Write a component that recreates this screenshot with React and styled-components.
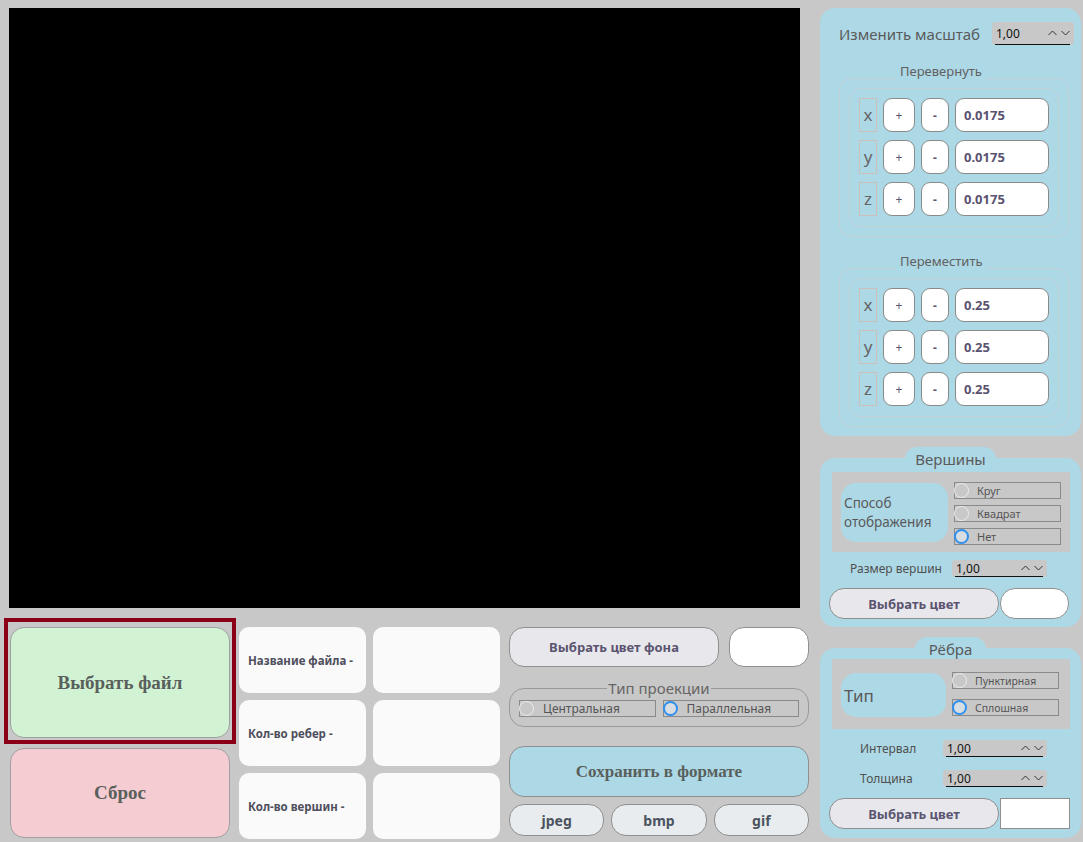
import styled, { createGlobalStyle } from "styled-components";

const GlobalStyle = createGlobalStyle`
  * { box-sizing: border-box; }
  html, body {
    margin: 0;
    padding: 0;
    background: #c8c8c8;
  }
  body {
    width: 1083px;
    height: 842px;
    overflow: hidden;
    font-family: "Noto Sans", "Open Sans", sans-serif;
    color: #555;
  }
`;

const BLUE = "#add8e6";
const GREY = "#c8c8c8";

const Window = styled.div`
  display: flex;
  height: 842px;
`;

const LeftCol = styled.div`
  width: 810px;
  display: flex;
  flex-direction: column;
`;

const Canvas = styled.div`
  margin: 8px 0 0 9px;
  width: 791px;
  height: 600px;
  background: #000;
`;

const Bottom = styled.div`
  display: flex;
  margin-top: 10px;
  padding-left: 4px;
`;

const FileCol = styled.div`
  width: 232px;
  display: flex;
  flex-direction: column;
`;

const FocusFrame = styled.div`
  height: 126px;
  border: 4px solid #8b0016;
  padding: 5px 2px 2px;
`;

const BigButton = styled.button`
  width: 100%;
  height: ${(p) => p.$h || "100%"};
  margin: ${(p) => p.$m || "0"};
  border: 1px solid #a0a0a0;
  border-radius: 14px;
  background: ${(p) => p.$bg};
  font-family: "Liberation Serif", "DejaVu Serif", serif;
  font-weight: 700;
  font-size: 19px;
  color: #59605c;
`;

const ResetWrap = styled.div`
  margin: 4px 6px 0;
  height: 90px;
  display: flex;
`;

const InfoGrid = styled.div`
  margin-left: 3px;
  padding-top: 9px;
  display: grid;
  grid-template-columns: 127px 127px;
  grid-auto-rows: 66px;
  gap: 7px;
`;

const InfoCell = styled.div`
  background: #fafafa;
  border-radius: 10px;
  display: flex;
  align-items: center;
  padding-left: 9px;
  font-weight: 700;
  font-size: 11.5px;
  color: #4e4e5c;
`;

const MidCol = styled.div`
  margin-left: 9px;
  width: 300px;
  padding-top: 9px;
  display: flex;
  flex-direction: column;
`;

const ButtonRow = styled.div`
  display: flex;
  gap: ${(p) => p.$gap || "10px"};
  height: ${(p) => p.$h};
  margin-top: ${(p) => p.$mt || "0"};
  margin-left: ${(p) => p.$ml || "0"};
`;

const PillButton = styled.button`
  width: ${(p) => p.$w};
  flex: ${(p) => (p.$w ? "none" : 1)};
  height: 100%;
  border: 1px solid #8f8f8f;
  border-radius: 15px;
  background: ${(p) => p.$bg || "#e8e8ec"};
  font-family: "Noto Sans", sans-serif;
  font-weight: 700;
  font-size: ${(p) => p.$fs || "13px"};
  color: ${(p) => p.$color || "#5b5470"};
  padding: 0;
`;

const Swatch = styled.div`
  width: ${(p) => p.$w};
  height: 100%;
  background: #fff;
  border: 1px solid #8f8f8f;
  border-radius: ${(p) => p.$r};
`;

const ProjectionSet = styled.fieldset`
  margin: 11px 0 0;
  padding: 2px 9px 9px;
  border: 1px solid #9a9a9a;
  border-radius: 15px;
  display: flex;
  gap: 7px;
`;

const ProjectionLegend = styled.legend`
  margin: 0 auto;
  padding: 0 1px;
  font-size: 15px;
  line-height: 20px;
  color: #666;
`;

const SaveButton = styled.button`
  margin-top: 19px;
  height: 51px;
  border: 1px solid #8f8f8f;
  border-radius: 15px;
  background: ${BLUE};
  font-family: "Liberation Serif", "DejaVu Serif", serif;
  font-weight: 700;
  font-size: 17px;
  color: #59605c;
`;

const RightCol = styled.div`
  margin-left: 10px;
  width: 261px;
  padding-top: 8px;
  display: flex;
  flex-direction: column;
`;

const TransformPanel = styled.div`
  background: ${BLUE};
  border-radius: 15px;
  height: 428px;
  padding: 14px 7px 9px 19px;
  display: flex;
  flex-direction: column;
`;

const ScaleRow = styled.div`
  display: flex;
  align-items: center;
  justify-content: space-between;
  height: 23px;
`;

const ScaleLabel = styled.span`
  font-size: 15px;
  color: #5a5a5a;
`;

const GroupSet = styled.fieldset`
  margin: ${(p) => p.$mt} 0 0;
  width: 230px;
  padding: 0 9px 9px;
  border: 1px solid #c4d2d8;
  border-radius: 12px;
`;

const GroupLegend = styled.legend`
  margin-left: 47px;
  padding: 0 4px 14px;
  font-size: 13px;
  line-height: 18px;
  color: #606060;
`;

const GroupInner = styled.div`
  margin-top: -6px;
  border: 1px solid #c4d2d8;
  border-radius: 12px;
  padding: 9px 9px 10px;
  display: flex;
  flex-direction: column;
  gap: 8px;
`;

const AxisRow = styled.div`
  display: flex;
  gap: 6px;
  height: 34px;
`;

const AxisBox = styled.div`
  width: 18px;
  border: 1px solid #cdbfba;
  display: flex;
  align-items: center;
  justify-content: center;
  font-size: 17px;
  color: #666;
  padding-bottom: 2px;
`;

const StepButton = styled.button`
  width: ${(p) => p.$w};
  height: 100%;
  border: 1px solid #8a8a8a;
  border-radius: 9px;
  background: #fff;
  font-family: "Noto Sans", sans-serif;
  font-size: 12px;
  font-weight: ${(p) => (p.$bold ? 700 : 400)};
  color: #5b5470;
  padding: 0;
`;

const ValueField = styled.div`
  width: 94px;
  border: 1px solid #8a8a8a;
  border-radius: 9px;
  background: #fff;
  display: flex;
  align-items: center;
  padding-left: 8px;
  font-weight: 700;
  font-size: 13px;
  color: #5a5270;
`;

const Panel = styled.div`
  margin-top: ${(p) => p.$mt};
  display: flex;
  flex-direction: column;
`;

const Tab = styled.div`
  align-self: center;
  width: ${(p) => p.$w};
  height: 22px;
  background: ${BLUE};
  border-radius: 12px 12px 0 0;
  position: relative;
  z-index: 1;
  text-align: center;
  font-size: 15px;
  line-height: 24px;
  color: #5a5a5a;
`;

const PanelBody = styled.div`
  margin-top: -11px;
  height: ${(p) => p.$h};
  background: ${BLUE};
  border-radius: 15px;
  padding: ${(p) => p.$pt} 11px 0 9px;
  display: flex;
  flex-direction: column;
`;

const OptionBox = styled.div`
  margin-left: 3px;
  height: ${(p) => p.$h};
  background: ${GREY};
  display: flex;
  align-items: flex-start;
  gap: 6px;
  padding: ${(p) => p.$pt} 8px 0 9px;
`;

const ModeLabel = styled.div`
  margin-top: 1px;
  width: ${(p) => p.$w};
  height: ${(p) => p.$h};
  background: ${BLUE};
  border-radius: 15px;
  display: flex;
  align-items: center;
  padding-left: 3px;
  font-size: ${(p) => p.$fs};
  line-height: 19px;
  color: #5a5a5a;
`;

const RadioList = styled.div`
  display: flex;
  flex-direction: column;
  gap: ${(p) => p.$gap};
  width: 107px;
`;

const RadioBox = styled.div`
  flex: ${(p) => (p.$grow ? 1 : "none")};
  width: ${(p) => p.$w || "auto"};
  height: 17px;
  border: 1px solid #8a8a8a;
  display: flex;
  align-items: center;
  gap: ${(p) => p.$gap || "8px"};
  font-size: ${(p) => p.$fs || "11px"};
  color: #555;
  white-space: nowrap;
`;

const Circle = styled.span`
  flex: none;
  width: 15px;
  height: 15px;
  margin-left: -1px;
  border-radius: 50%;
  background: ${(p) => (p.$on ? "#d8dde2" : GREY)};
  border: ${(p) => (p.$on ? "2.5px solid #2f90ee" : "1px solid #eeeeee")};
`;

const FieldRow = styled.div`
  display: flex;
  align-items: center;
  height: 17px;
  margin-top: ${(p) => p.$mt};
`;

const FieldLabel = styled.span`
  margin-left: ${(p) => p.$ml};
  width: ${(p) => p.$w};
  font-size: 12px;
  color: #505050;
`;

const Spin = styled.div`
  width: ${(p) => p.$w};
  height: ${(p) => p.$h || "17px"};
  background: ${GREY};
  border-radius: 3px;
  padding: 0 4px 0 3px;
  display: flex;
`;

const SpinLine = styled.div`
  flex: 1;
  display: flex;
  align-items: center;
  justify-content: space-between;
  border-bottom: 1px solid #111;
  font-size: 12px;
  color: #111;
  padding-left: 1px;
`;

const Arrows = styled.span`
  display: flex;
  gap: 4px;
  align-items: center;
`;

const Chevron = ({ down }) => (
  <svg width="9" height="6" viewBox="0 0 9 6">
    <path
      d={down ? "M0.5 1 L4.5 5 L8.5 1" : "M0.5 5 L4.5 1 L8.5 5"}
      fill="none"
      stroke="#333"
      strokeWidth="1"
    />
  </svg>
);

const SpinBox = ({ w, h }) => (
  <Spin $w={w} $h={h}>
    <SpinLine>
      1,00
      <Arrows>
        <Chevron />
        <Chevron down />
      </Arrows>
    </SpinLine>
  </Spin>
);

const Radio = ({ label, on, fs }) => (
  <RadioBox $fs={fs}>
    <Circle $on={on} />
    {label}
  </RadioBox>
);

const AxisGroup = ({ title, value, mt }) => (
  <GroupSet $mt={mt}>
    <GroupLegend>{title}</GroupLegend>
    <GroupInner>
      {["x", "y", "z"].map((axis) => (
        <AxisRow key={axis}>
          <AxisBox>{axis}</AxisBox>
          <StepButton $w="32px">+</StepButton>
          <StepButton $w="28px" $bold>
            -
          </StepButton>
          <ValueField>{value}</ValueField>
        </AxisRow>
      ))}
    </GroupInner>
  </GroupSet>
);

export default function App() {
  return (
    <>
      <GlobalStyle />
      <Window>
        <LeftCol>
          <Canvas />
          <Bottom>
            <FileCol>
              <FocusFrame>
                <BigButton $bg="#d1f3d4">Выбрать файл</BigButton>
              </FocusFrame>
              <ResetWrap>
                <BigButton $bg="#f5ccd1">Сброс</BigButton>
              </ResetWrap>
            </FileCol>

            <InfoGrid>
              <InfoCell>Название файла -</InfoCell>
              <InfoCell />
              <InfoCell>Кол-во ребер -</InfoCell>
              <InfoCell />
              <InfoCell>Кол-во вершин -</InfoCell>
              <InfoCell />
            </InfoGrid>

            <MidCol>
              <ButtonRow $h="40px">
                <PillButton $w="210px">Выбрать цвет фона</PillButton>
                <Swatch $w="80px" $r="15px" />
              </ButtonRow>

              <ProjectionSet>
                <ProjectionLegend>Тип проекции</ProjectionLegend>
                <RadioBox $grow $fs="12px" $gap="9px">
                  <Circle />
                  Центральная
                </RadioBox>
                <RadioBox $grow $fs="12px" $gap="9px">
                  <Circle $on />
                  Параллельная
                </RadioBox>
              </ProjectionSet>

              <SaveButton>Сохранить в формате</SaveButton>

              <ButtonRow $h="32px" $mt="7px" $gap="7px">
                <PillButton $bg="#e8ecee" $fs="14px" $color="#4b5360">
                  jpeg
                </PillButton>
                <PillButton $bg="#e8ecee" $fs="14px" $color="#4b5360">
                  bmp
                </PillButton>
                <PillButton $bg="#e8ecee" $fs="14px" $color="#4b5360">
                  gif
                </PillButton>
              </ButtonRow>
            </MidCol>
          </Bottom>
        </LeftCol>

        <RightCol>
          <TransformPanel>
            <ScaleRow>
              <ScaleLabel>Изменить масштаб</ScaleLabel>
              <SpinBox w="82px" h="23px" />
            </ScaleRow>
            <AxisGroup title="Перевернуть" value="0.0175" mt="17px" />
            <AxisGroup title="Переместить" value="0.25" mt="15px" />
          </TransformPanel>

          <Panel $mt="11px">
            <Tab $w="91px">Вершины</Tab>
            <PanelBody $h="169px" $pt="14px">
              <OptionBox $h="80px" $pt="10px">
                <ModeLabel $w="107px" $h="59px" $fs="13.5px">
                  Способ
                  <br />
                  отображения
                </ModeLabel>
                <RadioList $gap="6px">
                  <Radio label="Круг" />
                  <Radio label="Квадрат" />
                  <Radio label="Нет" on />
                </RadioList>
              </OptionBox>
              <FieldRow $mt="8px">
                <FieldLabel $ml="21px" $w="102px">
                  Размер вершин
                </FieldLabel>
                <SpinBox w="95px" />
              </FieldRow>
              <ButtonRow $h="31px" $mt="11px" $gap="1px">
                <PillButton $w="170px">Выбрать цвет</PillButton>
                <Swatch $w="69px" $r="15px" />
              </ButtonRow>
            </PanelBody>
          </Panel>

          <Panel $mt="10px">
            <Tab $w="71px">Рёбра</Tab>
            <PanelBody $h="190px" $pt="11px">
              <OptionBox $h="70px" $pt="13px">
                <ModeLabel $w="105px" $h="44px" $fs="17px">
                  Тип
                </ModeLabel>
                <RadioList $gap="10px">
                  <Radio label="Пунктирная" fs="10.5px" />
                  <Radio label="Сплошная" fs="10.5px" on />
                </RadioList>
              </OptionBox>
              <FieldRow $mt="11px">
                <FieldLabel $ml="31px" $w="83px">
                  Интервал
                </FieldLabel>
                <SpinBox w="104px" />
              </FieldRow>
              <FieldRow $mt="13px">
                <FieldLabel $ml="31px" $w="83px">
                  Толщина
                </FieldLabel>
                <SpinBox w="104px" />
              </FieldRow>
              <ButtonRow $h="31px" $mt="11px" $gap="1px">
                <PillButton $w="170px">Выбрать цвет</PillButton>
                <Swatch $w="71px" $r="0" />
              </ButtonRow>
            </PanelBody>
          </Panel>
        </RightCol>
      </Window>
    </>
  );
}
